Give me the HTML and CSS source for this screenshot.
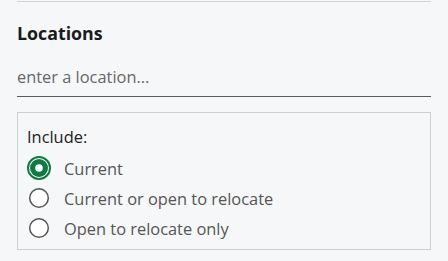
FILE: index.html
```html
<!DOCTYPE html>
<html>
<head>
<meta charset="utf-8">
<link rel="stylesheet" href="styles.css">
</head>
<body>
<div class="panel">
  <div class="rule"></div>
  <h2 class="title">Locations</h2>
  <div class="field">
    <input class="loc-input" type="text" placeholder="enter a location...">
  </div>
  <div class="group">
    <div class="legend">Include:</div>
    <div class="option">
      <svg class="radio" width="24" height="24" viewBox="0 0 24 24">
        <circle cx="12" cy="12" r="11" fill="none" stroke="#107a43" stroke-width="2"/>
        <circle cx="12" cy="12" r="9" fill="#107a43"/>
        <circle cx="12" cy="12" r="3.8" fill="#ffffff"/>
      </svg>
      <span class="opt-label">Current</span>
    </div>
    <div class="option">
      <svg class="radio" width="24" height="24" viewBox="0 0 24 24">
        <circle cx="12" cy="12" r="9.3" fill="#ffffff" stroke="#555555" stroke-width="1.5"/>
      </svg>
      <span class="opt-label">Current or open to relocate</span>
    </div>
    <div class="option">
      <svg class="radio" width="24" height="24" viewBox="0 0 24 24">
        <circle cx="12" cy="12" r="9.3" fill="#ffffff" stroke="#555555" stroke-width="1.5"/>
      </svg>
      <span class="opt-label">Open to relocate only</span>
    </div>
  </div>
</div>
</body>
</html>
```

FILE: styles.css
```css
html, body {
  margin: 0;
  padding: 0;
  background: #f6f7f9;
}
body {
  font-family: "Open Sans", "Noto Sans", sans-serif;
  color: #1f1f1f;
}
.panel {
  padding: 1px 17px 0 17px;
  width: 414px;
}
.rule {
  border-top: 1px solid #d3d3d3;
}
.title {
  margin: 19px 0 0 0;
  font-size: 17.8px;
  line-height: 24px;
  font-weight: 700;
  color: #1b1b1b;
}
.field {
  margin-top: 16px;
  border-bottom: 1.5px solid #5c5c5c;
}
.loc-input {
  display: block;
  width: 100%;
  box-sizing: border-box;
  border: none;
  background: transparent;
  outline: none;
  padding: 0 0 5px 0;
  height: 35px;
  font-family: inherit;
  font-size: 16.4px;
  color: #333;
}
.loc-input::placeholder {
  color: #666;
}
.group {
  margin-top: 15px;
  border: 1px solid #cfcfcf;
  height: 123px;
  padding: 13px 10px 0 9px;
}
.legend {
  font-size: 16.4px;
  line-height: 22px;
  color: #222;
  margin-bottom: 5px;
}
.option {
  display: flex;
  align-items: center;
  gap: 13px;
  height: 30px;
}
.radio {
  flex: none;
}
.opt-label {
  font-size: 16.4px;
  color: #555;
}
```
